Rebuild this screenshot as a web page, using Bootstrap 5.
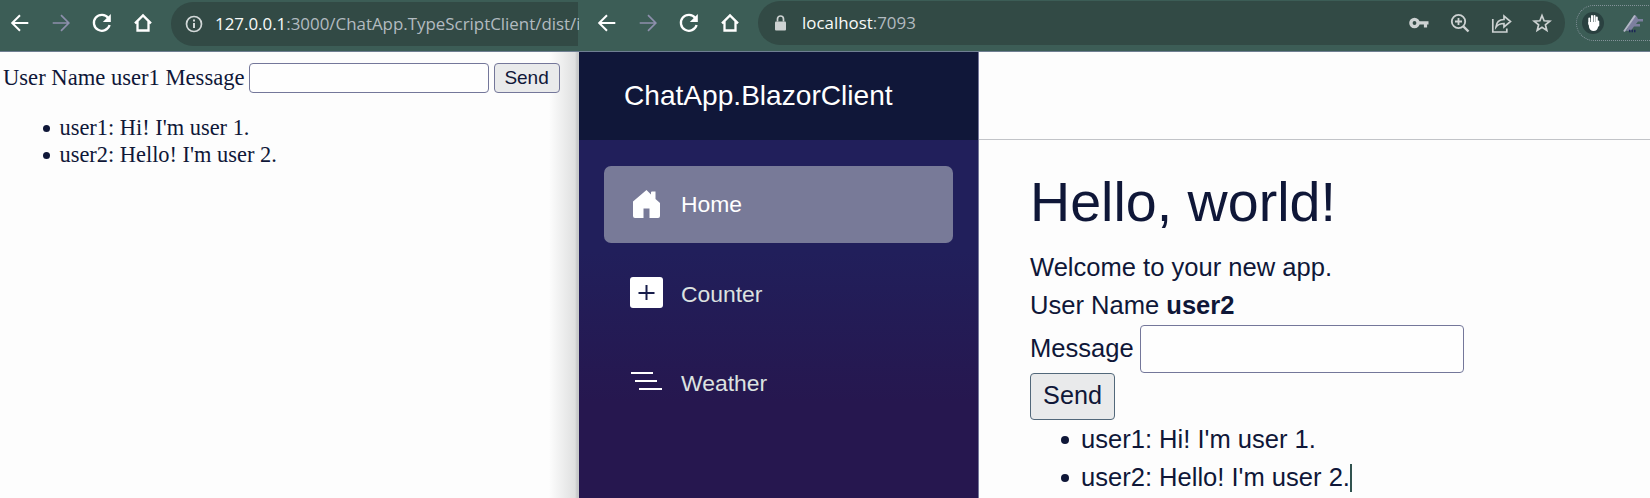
<!DOCTYPE html>
<html lang="en">
<head>
<meta charset="utf-8">
<title>ChatApp clients</title>
<link href="https://cdn.jsdelivr.net/npm/bootstrap@5.3.0/dist/css/bootstrap.min.css" rel="stylesheet">
<style>
body{width:1650px;height:498px;overflow:hidden;background:#fdfdfd;color:#0f1738;font-family:"Liberation Sans",Arial,sans-serif}
.win-left{width:579px;flex:none}
.toolbar{height:52px;background:#3c5d56;border-bottom:1px solid #6f7f92;padding:0 0 6px 8px;flex:none}
.toolbar svg{flex:none;display:block;overflow:visible}
.tools{gap:17px}
.omni{height:44px;background:#324a45;margin-top:2px;font-family:"Open Sans","Noto Sans",sans-serif;font-size:16.9px;white-space:nowrap;color:#b2bbc0}
.omni b{font-weight:400;color:#f8faf9}
.omni-l{width:407px;border-radius:22px 0 0 22px;margin-left:16px;padding-left:11px}
.omni-r{width:807px;border-radius:22px;margin-left:16px;margin-top:1px;padding:0 11px 0 11px}
.url{margin-left:9px}
.ts-page{font-family:"Liberation Serif",serif;font-size:22.6px;padding:9px 0 0 3px;background:linear-gradient(90deg,#fdfdfd 549px,#dfe0e0 575px,#c8caca 577px)}
.ts-form{height:34px;line-height:26px}
.ts-page ul{font-size:22.4px;line-height:26.7px;padding-left:56.500px;margin:20px 0 0}
.chat{list-style:none}
.chat li::before{content:"";display:inline-block;width:7px;height:7px;border-radius:50%;background:#0f1738;margin:0 10px 0 -17px;vertical-align:3px}
.main-body .chat li::before{width:8px;height:8px;margin:0 12px 0 -20px;vertical-align:4px}
.field{border:1px solid #74779a;border-radius:4px;background:#fefefe;padding:0;outline:0}
.push{border:1px solid #74779a;border-radius:4px;background:#e9eaeb;color:#0f1738;padding:0;font-family:"Liberation Sans",Arial,sans-serif}
.field-s{width:240px;height:30px;margin-left:4px}
.push-s{width:66px;height:30px;margin-left:5px;font-size:19px;line-height:26px}
.field-l{width:324px;height:48px;margin-left:6.500px}
.push-l{width:85px;height:47px;font-size:25.2px;line-height:41px;padding-bottom:2px;border-color:#52687a}
.side{width:400px;flex:none;background:linear-gradient(#211f5b 0 200px,#26174f 350px);border-right:1px solid #74779a}
.side-head{height:88px;background:#101739;color:#fff;font-size:28.1px;padding-left:45px}
.side-nav{padding:26px 25px;gap:12.3px}
.side-nav a{height:77px;border-radius:7px;padding-left:25px;color:#dde2e0;font-size:22.9px;text-decoration:none;gap:16px}
.side-nav a.active{background:#787a98;color:#fff}
.main-top{height:88px;border-bottom:1px solid #c2c4c8}
.main-body{padding:29px 0 0 51px;font-size:25.55px;line-height:37.5px}
.main-body h1{font-size:55.6px;line-height:66px;font-weight:400;margin:0 0 14px}
.message-row{padding-top:1px}
.main-body ul{line-height:38.4px;padding-left:51px;margin:0}
.caret{display:inline-block;width:2px;height:28px;background:#31534f;vertical-align:-6px}
.ext{height:36px;width:90px;border:1px dotted #84929a;border-right:0;border-radius:18px 0 0 18px;margin-left:11px;padding-left:4px;gap:15px}
.right-icons{gap:17px}
</style>
<script src="https://cdn.jsdelivr.net/npm/bootstrap@5.3.0/dist/js/bootstrap.bundle.min.js"></script>
</head>
<body class="d-flex">
<svg width="0" height="0" class="position-absolute">
  <symbol id="back" viewBox="0 0 24 24"><path d="M20.3 12H4.5M12 4.2 4.2 12l7.8 7.8" fill="none" stroke="currentColor" stroke-width="2"/></symbol>
  <symbol id="fwd" viewBox="0 0 24 24"><path d="M3.7 12h15.8M12 4.2l7.8 7.8-7.8 7.8" fill="none" stroke="currentColor" stroke-width="1.7"/></symbol>
  <symbol id="reload" viewBox="0 0 24 24"><path d="M18.3 7A8 8 0 1 0 19.6 14" fill="none" stroke="currentColor" stroke-width="2.3"/><path d="M20.8 3v8h-8z" fill="currentColor"/></symbol>
  <symbol id="house" viewBox="0 0 24 24"><path d="M4 12.4 12 4.4l8 8M6.5 10.5v9h11v-9" fill="none" stroke="currentColor" stroke-width="2.3"/></symbol>
</svg>

<div class="win-left d-flex flex-column">
  <div class="toolbar d-flex align-items-center text-white">
    <div class="tools d-flex">
      <svg width="24" height="24"><use href="#back"/></svg>
      <svg width="24" height="24" color="#8d8fac"><use href="#fwd"/></svg>
      <svg width="24" height="24"><use href="#reload"/></svg>
      <svg width="24" height="24"><use href="#house"/></svg>
    </div>
    <div class="omni omni-l d-flex align-items-center flex-shrink-0">
      <svg width="24" height="24" fill="none" stroke="#d2d8d8"><circle cx="12" cy="12" r="7.5" stroke-width="1.7"/><path d="M12 11v5M12 7.5v2" stroke-width="2"/></svg>
      <span class="url"><b>127.0.0.1</b>:3000/ChatApp.TypeScriptClient/dist/i</span>
    </div>
  </div>
  <div class="ts-page flex-grow-1">
    <div class="ts-form d-flex align-items-center">
      <span>User Name user1 Message</span>
      <input class="field field-s" type="text" aria-label="Message">
      <button class="push push-s">Send</button>
    </div>
    <ul class="chat">
      <li>user1: Hi! I'm user 1.</li>
      <li>user2: Hello! I'm user 2.</li>
    </ul>
  </div>
</div>

<div class="flex-grow-1 d-flex flex-column">
  <div class="toolbar d-flex align-items-center text-white ps-3">
    <div class="tools d-flex">
      <svg width="24" height="24"><use href="#back"/></svg>
      <svg width="24" height="24" color="#8d8fac"><use href="#fwd"/></svg>
      <svg width="24" height="24"><use href="#reload"/></svg>
      <svg width="24" height="24"><use href="#house"/></svg>
    </div>
    <div class="omni omni-r d-flex align-items-center flex-shrink-0">
      <svg width="24" height="24"><rect x="6" y="10.500" width="11" height="9" rx="1" fill="#cdd2d2"/><path d="M8.5 10.500V8a3 3 0 0 1 6 0v2.500" fill="none" stroke="#cdd2d2" stroke-width="1.7"/></svg>
      <span class="url"><b>localhost</b>:7093</span>
      <div class="right-icons d-flex ms-auto">
        <svg width="24" height="24" fill="none" stroke="#cdd2d2"><circle cx="7.500" cy="12" r="3.600" stroke-width="3.400"/><path d="M11 11.800h10.500M18.500 12v4.500" stroke-width="3.200"/></svg>
        <svg width="24" height="24" fill="none" stroke="#cdd2d2" stroke-width="1.800"><circle cx="10.500" cy="10.500" r="6.700"/><path d="M10.500 7v7M7 10.500h7"/><path d="m15.300 15.300 5.200 5.200" stroke-width="2.400"/></svg>
        <svg width="24" height="24" fill="none" stroke="#cdd2d2" stroke-width="1.700"><path d="M3.800 8v13h14v-3.500M7 16c.5-5.500 4-7.500 8-7.500V5l6.500 5.500-6.500 5.500v-3.500c-3.500 0-6 .8-8 3.500z"/></svg>
        <svg width="24" height="24" fill="none" stroke="#cdd2d2" stroke-width="1.700"><path d="m12 4.500 2.100 5.300 5.700.4-4.400 3.600 1.400 5.600-4.800-3.100-4.800 3.100 1.400-5.600-4.400-3.600 5.700-.4z"/></svg>
      </div>
    </div>
    <div class="ext d-flex align-items-center flex-shrink-0">
      <svg width="24" height="24"><circle cx="12" cy="12" r="11" fill="#2a4140"/><path d="M8.300 13V7.500M11 12V5M13.500 12V5M15.800 13V6.500M17.300 14.500v-4" stroke="#fff" stroke-width="2" stroke-linecap="round"/><path d="M7.300 11h9.500l1.200.5-.8 4c-.6 3-2 4.500-4.700 4.500-2.500 0-3.700-1.300-4.400-3.500z" fill="#fff"/></svg>
      <svg width="24" height="24"><path d="m6 20 9-16 2 2 1 2h5v2.500h-5l-2 2.500h4v2.500h-6l-3 4z" fill="#7c7f9e"/><path d="M4 20.500 15 4.500" stroke="#b4b7c8" stroke-width="2"/><path d="M9 20h7" stroke="#1c2756" stroke-width="2.500" stroke-dasharray="1.500 1"/></svg>
    </div>
  </div>
  <div class="d-flex flex-grow-1">
    <div class="side">
      <div class="side-head d-flex align-items-center">ChatApp.BlazorClient</div>
      <nav class="side-nav d-flex flex-column">
        <a href="#" class="active d-flex align-items-center"><svg width="36" height="36" fill="#fff"><path d="M4 14.500 17.500 3l4.500 4.500V5.500q0-1 1-1h3.500V12l4.500 4V29q0 2-2 2h-8.500v-9.500h-6V31H6q-2 0-2-2z"/></svg>Home</a>
        <a href="#" class="d-flex align-items-center"><svg width="36" height="36"><rect x="1" y="1" width="33" height="31" rx="3" fill="#fff"/><path d="M17.500 9v15M9.500 17h16" stroke="#171d4b" stroke-width="2"/></svg>Counter</a>
        <a href="#" class="d-flex align-items-center"><svg width="36" height="36" stroke="#fff" stroke-width="2"><path d="M2 8h22M6 16h22M10 24h23"/></svg>Weather</a>
      </nav>
    </div>
    <div class="flex-grow-1">
      <div class="main-top"></div>
      <div class="main-body">
        <h1>Hello, world!</h1>
        <div>Welcome to your new app.</div>
        <div>User Name <b>user2</b></div>
        <div class="message-row d-flex align-items-center"><span>Message</span><input class="field field-l" type="text" aria-label="Message"></div>
        <button class="push push-l d-block">Send</button>
        <ul class="chat">
          <li>user1: Hi! I'm user 1.</li>
          <li>user2: Hello! I'm user 2.<span class="caret"></span></li>
        </ul>
      </div>
    </div>
  </div>
</div>
</body>
</html>
